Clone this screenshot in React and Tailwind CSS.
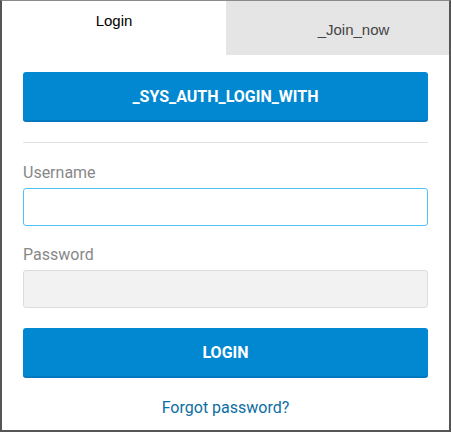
export default function App() {
  return (
    <div className="w-[451px] h-[432px] bg-white border-t border-l-2 border-r-2 border-b-2 border-t-[#8a8a8a] border-l-[#555] border-r-[#555] border-b-[#555] flex flex-col overflow-hidden">
      <div className="flex h-[54px] shrink-0" style={{ fontFamily: '"Liberation Sans", Arial, sans-serif' }}>
        <div className="w-[224px] bg-white text-center text-[15px] text-black pt-[10px] leading-[20px]">Login</div>
        <div className="flex-1 bg-[#e5e5e5] text-center text-[15px] text-[#444] pt-[19px] pl-[32px] leading-[20px]">_Join_now</div>
      </div>
      <div className="px-[21px] flex flex-col" style={{ fontFamily: 'Roboto, "Liberation Sans", sans-serif' }}>
        <button className="mt-[17px] h-[50px] w-full rounded-[3px] bg-[#0288d1] border-b-2 border-b-[#0277bd] text-white font-bold text-[16px] leading-none flex items-center justify-center pt-[1px]">
          _SYS_AUTH_LOGIN_WITH
        </button>
        <div className="mt-[20px] h-px bg-[#e3e3e3]"></div>
        <label className="mt-[20px] text-[16px] leading-[20px] text-[#888]">Username</label>
        <input className="mt-[5px] h-[38px] w-full rounded-[3px] border border-[#4fc3f7] bg-white outline-none px-2" />
        <label className="mt-[19px] text-[16px] leading-[20px] text-[#888]">Password</label>
        <input type="password" disabled className="mt-[5px] h-[38px] w-full rounded-[3px] border border-[#dcdcdc] bg-[#f2f2f2] outline-none px-2" />
        <button className="mt-[20px] h-[50px] w-full rounded-[3px] bg-[#0288d1] border-b-2 border-b-[#0277bd] text-white font-bold text-[16px] leading-none flex items-center justify-center pt-[1px]">
          LOGIN
        </button>
        <div className="mt-[20px] text-center text-[16px] leading-[20px] text-[#0b6ea3]">Forgot password?</div>
      </div>
    </div>
  );
}
